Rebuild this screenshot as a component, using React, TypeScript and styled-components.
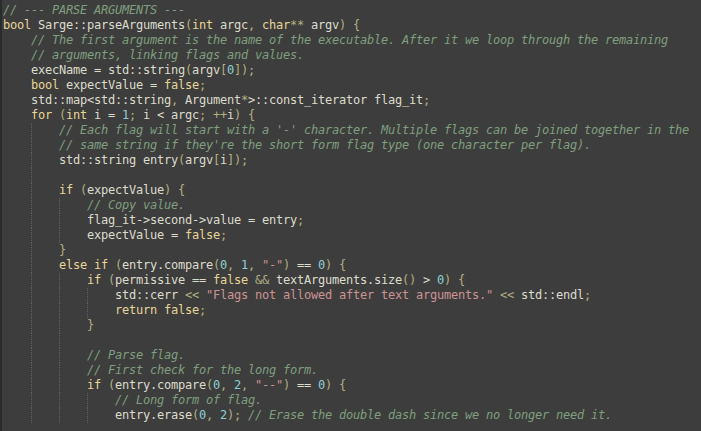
import React from "react";
import styled, { createGlobalStyle } from "styled-components";

type Kind = "plain" | "kw" | "com" | "str" | "num" | "pun";

const COLORS: Record<Kind, string> = {
  plain: "#dcdccc",
  kw: "#e8d597",
  com: "#7f9f7f",
  str: "#cc9393",
  num: "#8cd0d3",
  pun: "#b3b080",
};

const KW = new Set(["bool", "int", "char", "for", "if", "else", "return", "false", "true"]);

const CODE: string[] = [
  "// --- PARSE ARGUMENTS ---",
  "bool Sarge::parseArguments(int argc, char** argv) {",
  "    // The first argument is the name of the executable. After it we loop through the remaining",
  "    // arguments, linking flags and values.",
  "    execName = std::string(argv[0]);",
  "    bool expectValue = false;",
  "    std::map<std::string, Argument*>::const_iterator flag_it;",
  "    for (int i = 1; i < argc; ++i) {",
  "        // Each flag will start with a '-' character. Multiple flags can be joined together in the",
  "        // same string if they're the short form flag type (one character per flag).",
  "        std::string entry(argv[i]);",
  "",
  "        if (expectValue) {",
  "            // Copy value.",
  "            flag_it->second->value = entry;",
  "            expectValue = false;",
  "        }",
  '        else if (entry.compare(0, 1, "-") == 0) {',
  "            if (permissive == false && textArguments.size() > 0) {",
  '                std::cerr << "Flags not allowed after text arguments." << std::endl;',
  "                return false;",
  "            }",
  "",
  "            // Parse flag.",
  "            // First check for the long form.",
  '            if (entry.compare(0, 2, "--") == 0) {',
  "                // Long form of flag.",
  "                entry.erase(0, 2); // Erase the double dash since we no longer need it.",
];

// indentation guides: [column, firstLine, lastLine] (1-indexed lines)
const GUIDES: [number, number, number][] = [
  [4, 9, 28],
  [8, 14, 16],
  [8, 19, 28],
  [12, 20, 21],
  [12, 27, 28],
];

const FOLD_ENDS = new Set([17, 22]);

const CHAR_W = 7;

interface Tok {
  t: string;
  k: Kind;
}

function tokenize(line: string): Tok[] {
  const out: Tok[] = [];
  let i = 0;
  while (i < line.length) {
    const rest = line.slice(i);
    if (rest.startsWith("//")) {
      out.push({ t: rest, k: "com" });
      break;
    }
    if (rest[0] === '"') {
      const j = line.indexOf('"', i + 1);
      out.push({ t: line.slice(i, j + 1), k: "str" });
      i = j + 1;
      continue;
    }
    let m = /^[A-Za-z_]\w*/.exec(rest);
    if (m) {
      out.push({ t: m[0], k: KW.has(m[0]) ? "kw" : "plain" });
      i += m[0].length;
      continue;
    }
    m = /^\d+/.exec(rest);
    if (m) {
      out.push({ t: m[0], k: "num" });
      i += m[0].length;
      continue;
    }
    m = /^(&&|<<|\+\+|\*+|[()[\]{},;])/.exec(rest);
    if (m) {
      out.push({ t: m[0], k: "pun" });
      i += m[0].length;
      continue;
    }
    m = /^(::|->|==|\s+|.)/.exec(rest);
    const s = m ? m[0] : rest[0];
    out.push({ t: s, k: "plain" });
    i += s.length;
  }
  return out;
}

const GlobalStyle = createGlobalStyle`
  html, body {
    margin: 0;
    padding: 0;
    background: #3d3d3d;
  }
`;

const Editor = styled.div`
  width: 701px;
  height: 431px;
  box-sizing: border-box;
  overflow: hidden;
  background: #3d3d3d;
  border-left: 2px solid #2b2b2b;
  padding: 3px 0 0 1px;
  font-family: "DejaVu Sans Mono", "Liberation Mono", monospace;
  font-size: 12px;
  letter-spacing: -0.225px;
  line-height: 15px;
  color: #dcdccc;
`;

const Line = styled.div<{ $foldEnd?: boolean }>`
  position: relative;
  height: 15px;
  white-space: pre;

  &::before {
    content: "";
    display: ${(p) => (p.$foldEnd ? "block" : "none")};
    position: absolute;
    left: -3px;
    top: 7px;
    width: 2px;
    height: 1px;
    background: #8a8a8a;
  }
`;

const Guide = styled.span`
  position: absolute;
  top: 0;
  bottom: 0;
  width: 0;
  border-left: 1px dotted #626262;
`;

const Token = styled.span<{ $kind: Kind }>`
  position: relative;
  color: ${(p) => COLORS[p.$kind]};
  font-style: ${(p) => (p.$kind === "com" ? "italic" : "normal")};
`;

export default function App() {
  return (
    <>
      <GlobalStyle />
      <Editor>
        {CODE.map((line, idx) => {
          const n = idx + 1;
          const guides = GUIDES.filter(([, a, b]) => n >= a && n <= b);
          return (
            <Line key={n} $foldEnd={FOLD_ENDS.has(n)}>
              {guides.map(([col]) => (
                <Guide key={col} style={{ left: col * CHAR_W }} />
              ))}
              {line === "" ? " " : tokenize(line).map((tk, i) => (
                <Token key={i} $kind={tk.k}>
                  {tk.t}
                </Token>
              ))}
            </Line>
          );
        })}
      </Editor>
    </>
  );
}
